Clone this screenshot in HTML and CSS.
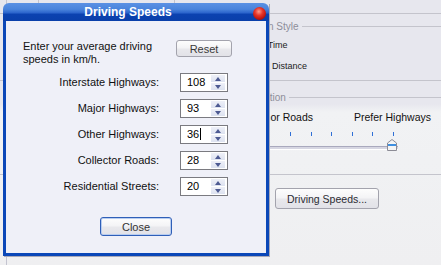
FILE: index.html
```html
<!DOCTYPE html>
<html lang="en">
<head>
    <meta charset="UTF-8">
    <title>Driving Speeds</title>
    <link rel="stylesheet" href="styles.css">
</head>
<body>

<div id="window">
    <div class="tabstrip">
        <div class="tab tab-first"></div>
        <div class="tab tab-second"></div>
    </div>

    <div class="group">
        <div class="legend"><span>Optimization Style</span></div>
        <div class="radio-row radio-first"><span class="radio"></span>Fastest Time</div>
        <div class="radio-row radio-second"><span class="radio"></span>Shortest Distance</div>
    </div>

    <div class="group group-roads">
        <div class="legend legend-roads"><span>Road Selection</span></div>
        <div class="slider-labels">
            <span>Prefer Minor Roads</span>
            <span>Prefer Highways</span>
        </div>
        <div class="slider">
            <div class="ticks">
                <i></i><i></i><i></i><i></i><i></i><i></i><i></i><i></i><i></i>
            </div>
            <div class="track">
                <svg class="thumb" width="10" height="12" viewBox="0 0 10 12">
                    <path d="M0.5 11.5 V4 L5 0.5 L9.5 4 V11.5 Z" fill="#f4f4f4" stroke="#8c8c96"/>
                    <rect x="1" y="5" width="8" height="2" fill="#3f8fe0"/>
                </svg>
            </div>
        </div>
    </div>

    <div class="bottom-area">
        <button class="xp-button speeds-button">Driving Speeds...</button>
    </div>
</div>

<!-- the dialog sits on top of the options window -->
<div id="dialog">
    <div class="titlebar">
        <span class="title">Driving Speeds</span>
        <span class="close-ball"></span>
    </div>
    <div class="dialog-body">
        <div class="intro">
            <p class="intro-text">Enter your average driving speeds in km/h.</p>
            <button class="xp-button reset-button">Reset</button>
        </div>

        <div class="speed-rows">
            <label>Interstate Highways:</label>
            <div class="spin"><span class="value">108</span><span class="spin-buttons"><b class="up"></b><b class="down"></b></span></div>

            <label>Major Highways:</label>
            <div class="spin"><span class="value">93</span><span class="spin-buttons"><b class="up"></b><b class="down"></b></span></div>

            <label>Other Highways:</label>
            <div class="spin"><span class="value">36<span class="caret"></span></span><span class="spin-buttons"><b class="up"></b><b class="down"></b></span></div>

            <label>Collector Roads:</label>
            <div class="spin"><span class="value">28</span><span class="spin-buttons"><b class="up"></b><b class="down"></b></span></div>

            <label>Residential Streets:</label>
            <div class="spin"><span class="value">20</span><span class="spin-buttons"><b class="up"></b><b class="down"></b></span></div>
        </div>

        <div class="close-row">
            <button class="xp-button close-button">Close</button>
        </div>
    </div>
</div>

</body>
</html>
```

FILE: styles.css
```css
body {
    margin: 0;
    width: 441px;
    height: 265px;
    overflow: hidden;
    font-family: 'Liberation Sans', Arial, sans-serif;
    font-size: 11px;
    color: #1b1b1b;
    background:
        linear-gradient(#c4c4d0, #c4c4d0) 6px 0 / 1px 100% no-repeat,
        linear-gradient(to bottom, #e7e7ee 0px, #e7e7ee 104px, #f1f2f4 112px, #f0f1f3 160px, #efeff1 265px);
}

#window {
    width: 441px;
    height: 265px;
}

.tabstrip {
    display: flex;
    height: 13px;
    border-bottom: 1px solid #c4c4cc;
}

.tab {
    border-right: 1px solid #c4c4cc;
}

.tab-first {
    width: 38px;
}

.tab-second {
    width: 135px;
}

.group {
    padding-left: 218px;
}

.legend {
    display: flex;
    align-items: center;
    height: 12px;
    margin-top: 6px;
    font-size: 10px;
    color: #8e8e9a;
}

.legend::after {
    content: "";
    flex: 1;
    height: 1px;
    margin-left: 3px;
    background: #c4c4cc;
}

.radio-row {
    display: flex;
    align-items: center;
    height: 12px;
    font-size: 9px;
    color: #222;
}

.radio-first {
    margin-top: 7px;
}

.radio-second {
    margin-top: 9px;
}

.radio {
    width: 11px;
    height: 11px;
    border: 1px solid #6b7fa8;
    border-radius: 50%;
    background: #fff;
    margin-right: 5px;
}

.group-roads {
    margin-top: 8px;
    border-top: 1px solid #c4c4cc;
}

.legend-roads {
    margin-top: 10px;
}

.slider-labels {
    display: flex;
    justify-content: space-between;
    margin: 8px 10px 0 4px;
    height: 12px;
    font-size: 10.5px;
    color: #111;
}

.slider {
    margin-left: 10px;
    width: 180px;
}

.ticks {
    display: flex;
    justify-content: space-between;
    width: 166px;
    margin-top: 9px;
    height: 4px;
}

.ticks i {
    width: 1px;
    height: 4px;
    background: #2f6fd6;
}

.track {
    position: relative;
    margin-top: 10px;
    width: 170px;
    height: 2px;
    border-top: 1px solid #a9a9bd;
    border-bottom: 1px solid #fff;
    background: #d6d6e2;
}

.thumb {
    position: absolute;
    right: 1px;
    top: -8px;
}

.bottom-area {
    margin-top: 24px;
    border-top: 1px solid #c4c4cc;
    padding: 13px 0 0 275px;
}

.xp-button {
    font-family: 'Liberation Sans', Arial, sans-serif;
    font-size: 11px;
    color: #333;
    border: 1px solid #a3a3ad;
    border-radius: 3px;
    background: linear-gradient(to bottom, #fdfdfd 0%, #f4f4f6 45%, #e8e8ec 55%, #e2e2e8 100%);
    padding: 0;
    margin: 0;
}

.speeds-button {
    width: 104px;
    height: 21px;
    font-size: 10.5px;
    color: #2b2b33;
}

/* dialog */

#dialog {
    position: absolute;
    left: 3px;
    top: 3px;
    width: 266px;
    box-shadow: 1px 1px 0 #a9a9b8;
}

.titlebar {
    position: relative;
    display: flex;
    align-items: center;
    justify-content: center;
    height: 18px;
    padding-right: 16px;
    border-radius: 6px 6px 0 0;
    background: linear-gradient(to bottom, #5b91e4 0%, #4a84dc 35%, #2b64cc 55%, #0b42b0 62%, #0a3faa 100%);
}

.title {
    font-weight: bold;
    font-size: 12px;
    color: #fff;
}

.close-ball {
    position: absolute;
    right: 3px;
    top: 4px;
    width: 13px;
    height: 13px;
    border-radius: 50%;
    background: radial-gradient(circle at 45% 35%, #ff9b8a 0%, #e8362a 35%, #b8120c 70%, #7c0a08 100%);
}

.dialog-body {
    border: 3px solid #0b47b8;
    border-top: 0;
    background: #eff0f8;
    padding: 19px 0 17px 17px;
}

.intro {
    display: flex;
    align-items: flex-start;
}

.intro-text {
    margin: 0;
    width: 153px;
    line-height: 13px;
    color: #111;
}

.reset-button {
    width: 56px;
    height: 17px;
    color: #3a3a3a;
}

.speed-rows {
    display: grid;
    grid-template-columns: 136px 48px;
    column-gap: 21px;
    row-gap: 7px;
    margin-top: 7px;
}

.speed-rows label {
    text-align: right;
    line-height: 19px;
    color: #111;
}

.spin {
    display: flex;
    height: 19px;
    box-sizing: border-box;
    border: 1px solid #7a7a80;
    background: #fff;
}

.value {
    flex: 1;
    padding-left: 6px;
    line-height: 17px;
    color: #000;
}

.caret {
    display: inline-block;
    width: 1px;
    height: 12px;
    margin-left: 1px;
    vertical-align: -2px;
    background: #000;
}

.spin-buttons {
    display: flex;
    flex-direction: column;
    width: 14px;
    margin: 1px 2px 1px 0;
    gap: 1px;
}

.spin-buttons b {
    flex: 1;
    display: flex;
    align-items: center;
    justify-content: center;
    background: linear-gradient(to bottom, #eef0f8, #dde2f0);
}

.spin-buttons b::after {
    content: "";
    border-left: 3.5px solid transparent;
    border-right: 3.5px solid transparent;
}

.spin-buttons .up::after {
    border-bottom: 4px solid #4d5a92;
}

.spin-buttons .down::after {
    border-top: 4px solid #4d5a92;
}

.close-row {
    display: flex;
    justify-content: center;
    margin-top: 21px;
    padding-right: 17px;
}

.close-button {
    width: 72px;
    height: 19px;
    border: 1px solid #2f5fb8;
    box-shadow: inset 0 0 0 1px #b8cdf0;
}
```
